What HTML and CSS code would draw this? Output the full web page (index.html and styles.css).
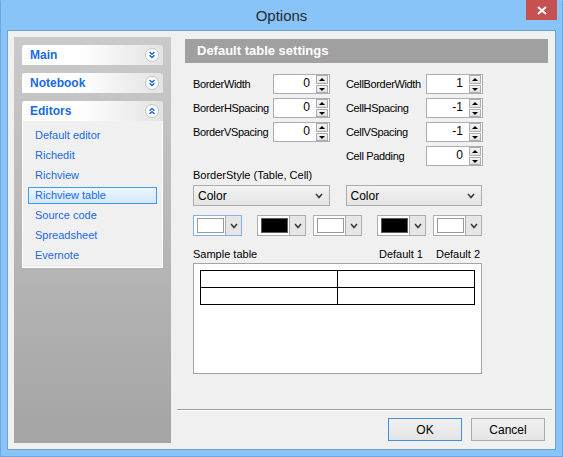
FILE: index.html
```html
<!DOCTYPE html>
<html lang="en">
<head>
    <meta charset="UTF-8">
    <title>Options</title>
    <link rel="stylesheet" href="styles.css">
</head>
<body>
    <div class="window">
        <div class="titlebar">
            <span class="title">Options</span>
            <button class="close" title="Close">
                <svg width="10" height="9" viewBox="0 0 10 9"><path d="M1 1 L9 8 M9 1 L1 8" stroke="#fff" stroke-width="2"/></svg>
            </button>
        </div>

        <div class="client">
            <aside class="nav">
                <div class="group">
                    <div class="group-head">Main
                        <svg class="chev" width="14" height="14" viewBox="0 0 14 14"><circle cx="7" cy="7" r="6.5" fill="#fff" stroke="#c4c4c4"/><path d="M4.5 4 L7 6.3 L9.5 4 M4.5 7.2 L7 9.5 L9.5 7.2" fill="none" stroke="#1a6ae4" stroke-width="1.4"/></svg>
                    </div>
                </div>
                <div class="group">
                    <div class="group-head">Notebook
                        <svg class="chev" width="14" height="14" viewBox="0 0 14 14"><circle cx="7" cy="7" r="6.5" fill="#fff" stroke="#c4c4c4"/><path d="M4.5 4 L7 6.3 L9.5 4 M4.5 7.2 L7 9.5 L9.5 7.2" fill="none" stroke="#1a6ae4" stroke-width="1.4"/></svg>
                    </div>
                </div>
                <div class="group">
                    <div class="group-head">Editors
                        <svg class="chev" width="14" height="14" viewBox="0 0 14 14"><circle cx="7" cy="7" r="6.5" fill="#fff" stroke="#c4c4c4"/><path d="M4.5 6.8 L7 4.5 L9.5 6.8 M4.5 10 L7 7.7 L9.5 10" fill="none" stroke="#1a6ae4" stroke-width="1.4"/></svg>
                    </div>
                    <ul class="group-body">
                        <li>Default editor</li>
                        <li>Richedit</li>
                        <li>Richview</li>
                        <li class="selected">Richview table</li>
                        <li>Source code</li>
                        <li>Spreadsheet</li>
                        <li>Evernote</li>
                    </ul>
                </div>
            </aside>

            <main class="pane">
                <div class="pane-head">Default table settings</div>

                <div class="form">
                    <div class="spins">
                        <div class="spin-col">
                            <div class="row"><span class="label">BorderWidth</span><div class="spin"><span class="val">0</span><span class="arrows"><i class="up"></i><i class="down"></i></span></div></div>
                            <div class="row"><span class="label">BorderHSpacing</span><div class="spin"><span class="val">0</span><span class="arrows"><i class="up"></i><i class="down"></i></span></div></div>
                            <div class="row"><span class="label">BorderVSpacing</span><div class="spin"><span class="val">0</span><span class="arrows"><i class="up"></i><i class="down"></i></span></div></div>
                        </div>
                        <div class="spin-col">
                            <div class="row"><span class="label">CellBorderWidth</span><div class="spin"><span class="val">1</span><span class="arrows"><i class="up"></i><i class="down"></i></span></div></div>
                            <div class="row"><span class="label">CellHSpacing</span><div class="spin"><span class="val">-1</span><span class="arrows"><i class="up"></i><i class="down"></i></span></div></div>
                            <div class="row"><span class="label">CellVSpacing</span><div class="spin"><span class="val">-1</span><span class="arrows"><i class="up"></i><i class="down"></i></span></div></div>
                            <div class="row"><span class="label">Cell Padding</span><div class="spin"><span class="val">0</span><span class="arrows"><i class="up"></i><i class="down"></i></span></div></div>
                        </div>
                    </div>

                    <div class="caption">BorderStyle (Table, Cell)</div>
                    <div class="combos">
                        <div class="combo">Color <svg width="8" height="6" viewBox="0 0 8 6"><path d="M1 1 L4 4.5 L7 1" fill="none" stroke="#3c3c3c" stroke-width="1.6"/></svg></div>
                        <div class="combo">Color <svg width="8" height="6" viewBox="0 0 8 6"><path d="M1 1 L4 4.5 L7 1" fill="none" stroke="#3c3c3c" stroke-width="1.6"/></svg></div>
                    </div>

                    <div class="pickers">
                        <div class="picker focused"><span class="swatch"></span><span class="drop"><svg width="8" height="6" viewBox="0 0 8 6"><path d="M1 1 L4 4.5 L7 1" fill="none" stroke="#3c3c3c" stroke-width="1.6"/></svg></span></div>
                        <div class="picker"><span class="swatch black"></span><span class="drop"><svg width="8" height="6" viewBox="0 0 8 6"><path d="M1 1 L4 4.5 L7 1" fill="none" stroke="#3c3c3c" stroke-width="1.6"/></svg></span></div>
                        <div class="picker"><span class="swatch"></span><span class="drop"><svg width="8" height="6" viewBox="0 0 8 6"><path d="M1 1 L4 4.5 L7 1" fill="none" stroke="#3c3c3c" stroke-width="1.6"/></svg></span></div>
                        <div class="picker"><span class="swatch black"></span><span class="drop"><svg width="8" height="6" viewBox="0 0 8 6"><path d="M1 1 L4 4.5 L7 1" fill="none" stroke="#3c3c3c" stroke-width="1.6"/></svg></span></div>
                        <div class="picker"><span class="swatch"></span><span class="drop"><svg width="8" height="6" viewBox="0 0 8 6"><path d="M1 1 L4 4.5 L7 1" fill="none" stroke="#3c3c3c" stroke-width="1.6"/></svg></span></div>
                    </div>

                    <div class="sample-head">
                        <span class="grow">Sample table</span>
                        <span>Default 1</span>
                        <span>Default 2</span>
                    </div>
                    <div class="sample">
                        <table>
                            <tr><td></td><td></td></tr>
                            <tr><td></td><td></td></tr>
                        </table>
                    </div>
                </div>

                <div class="sep"></div>
                <div class="buttons">
                    <button class="btn default">OK</button>
                    <button class="btn">Cancel</button>
                </div>
            </main>
        </div>
    </div>
</body>
</html>
```

FILE: styles.css
```css
* {
    box-sizing: border-box;
}

body {
    margin: 0;
    font-family: 'Liberation Sans', Arial, sans-serif;
    font-size: 11px;
    color: #000;
    background: #88c4f7;
}

.window {
    width: 563px;
    height: 457px;
    display: flex;
    flex-direction: column;
    background: #88c4f7;
    border: 1px solid #72a6da;
    border-top-color: #88c4f7;
    padding: 0 6px 6px 6px;
}

/* title bar */
.titlebar {
    height: 29px;
    display: grid;
    grid-template-columns: 1fr auto 1fr;
    align-items: start;
}

.title {
    grid-column: 2;
    font-size: 15px;
    line-height: 28px;
    color: #252a30;
    padding-top: 1px;
}

.close {
    grid-column: 3;
    justify-self: end;
    width: 31px;
    height: 20px;
    margin-top: -1px;
    margin-right: -1px;
    border: none;
    padding: 0;
    background: #c75050;
    display: flex;
    align-items: center;
    justify-content: center;
}

/* client area */
.client {
    flex: 1;
    display: flex;
    background: #f0f0f0;
    border: 1px solid #6fa3d6;
    padding: 6px 3px 6px 6px;
}

/* left navigation */
.nav {
    width: 157px;
    padding: 8px;
    background: linear-gradient(#cacaca, #a4a4a4);
}

.group {
    margin-bottom: 8px;
}

.group-head {
    height: 20px;
    display: flex;
    align-items: center;
    justify-content: space-between;
    padding: 0 4px 0 8px;
    border-radius: 3px 3px 0 0;
    background: linear-gradient(to right, #ffffff 40%, #e3e3e3);
    color: #1a6ae4;
    font-size: 12px;
    font-weight: bold;
}

.group-body {
    list-style: none;
    margin: 0;
    padding: 6px 5px 0 5px;
    background: #f0f0f0;
    border: 1px solid #fff;
    border-top: none;
}

.group-body li {
    height: 17px;
    line-height: 15px;
    margin-bottom: 3px;
    padding-left: 6px;
    border: 1px solid transparent;
    color: #1a6ae4;
}

.group-body li.selected {
    border-color: #3d9bf3;
    background: linear-gradient(#eef6fe, #d3e8fc);
}

/* right pane */
.pane {
    flex: 1;
    display: flex;
    flex-direction: column;
    margin-left: 6px;
    padding: 2px 0;
}

.pane-head {
    height: 24px;
    line-height: 24px;
    margin: 0 4px 0 8px;
    padding-left: 12px;
    background: #a0a0a0;
    color: #fff;
    font-size: 13px;
    font-weight: bold;
}

.form {
    flex: 1;
    width: 305px;
    padding: 11px 0 0 16px;
}

.spins {
    display: flex;
    gap: 16px;
}

.spin-col {
    display: flex;
    flex-direction: column;
    gap: 4px;
}

.row {
    display: flex;
    align-items: center;
    height: 20px;
}

.label {
    width: 80px;
    letter-spacing: -0.35px;
    white-space: nowrap;
}

.spin {
    width: 57px;
    height: 20px;
    display: flex;
    border: 1px solid #abadb3;
    background: #fff;
}

.val {
    flex: 1;
    text-align: right;
    padding-right: 6px;
    font-size: 12px;
    line-height: 17px;
}

.arrows {
    width: 12px;
    margin-right: 1px;
    display: flex;
    flex-direction: column;
    gap: 1px;
}

.arrows i {
    flex: 1;
    position: relative;
    border: 1px solid #acacac;
    background: linear-gradient(#f3f3f3, #e2e2e2);
}

.arrows i::after {
    content: "";
    position: absolute;
    left: 2px;
    top: 2px;
    border-left: 3px solid transparent;
    border-right: 3px solid transparent;
}

.arrows .up::after {
    border-bottom: 3px solid #000;
}

.arrows .down::after {
    border-top: 3px solid #000;
}

.caption {
    margin-top: 2px;
    height: 15px;
    line-height: 15px;
}

.combos {
    display: flex;
    gap: 16px;
    margin-top: 2px;
}

.combo {
    width: 137px;
    height: 21px;
    display: flex;
    align-items: center;
    justify-content: space-between;
    padding: 0 6px 0 4px;
    border: 1px solid #acacac;
    background: linear-gradient(#f2f2f2, #e5e5e5);
    font-size: 12px;
}

.pickers {
    display: flex;
    margin-top: 9px;
}

.picker {
    width: 49px;
    height: 21px;
    display: flex;
    border: 1px solid #adadad;
    background: #fff;
}

.picker + .picker {
    margin-left: 15px;
}

.picker:nth-child(3),
.picker:nth-child(5) {
    margin-left: 7px;
}

.picker.focused {
    border-color: #7eb4ea;
}

.swatch {
    width: 27px;
    height: 15px;
    margin: 2px 0 0 3px;
    border: 1px solid #9a9a9a;
    background: #fff;
}

.swatch.black {
    background: #000;
    border-color: #5a5a5a;
}

.drop {
    flex: 1;
    margin-left: 1px;
    border-left: 1px solid #acacac;
    background: #e6e6e6;
    display: flex;
    align-items: center;
    justify-content: center;
}

.sample-head {
    display: flex;
    gap: 13px;
    margin-top: 10px;
    height: 17px;
    line-height: 17px;
    padding-right: 2px;
}

.sample-head .grow {
    flex: 1;
}

.sample {
    width: 289px;
    height: 111px;
    border: 1px solid #a4a4a4;
    background: #fff;
    padding: 6px;
}

.sample table {
    width: 100%;
    border-collapse: collapse;
}

.sample td {
    border: 1px solid #000;
    height: 17px;
    width: 50%;
}

.sep {
    margin-top: auto;
    border-top: 1px solid #a0a0a0;
    border-bottom: 1px solid #fff;
}

.buttons {
    display: flex;
    justify-content: flex-end;
    gap: 9px;
    margin-top: 7px;
    padding-right: 7px;
}

.btn {
    width: 74px;
    height: 23px;
    font-family: 'Liberation Sans', Arial, sans-serif;
    font-size: 12px;
    color: #000;
    border: 1px solid #acacac;
    background: linear-gradient(#f0f0f0, #e5e5e5);
}

.btn.default {
    border-color: #3c93e6;
}
```
